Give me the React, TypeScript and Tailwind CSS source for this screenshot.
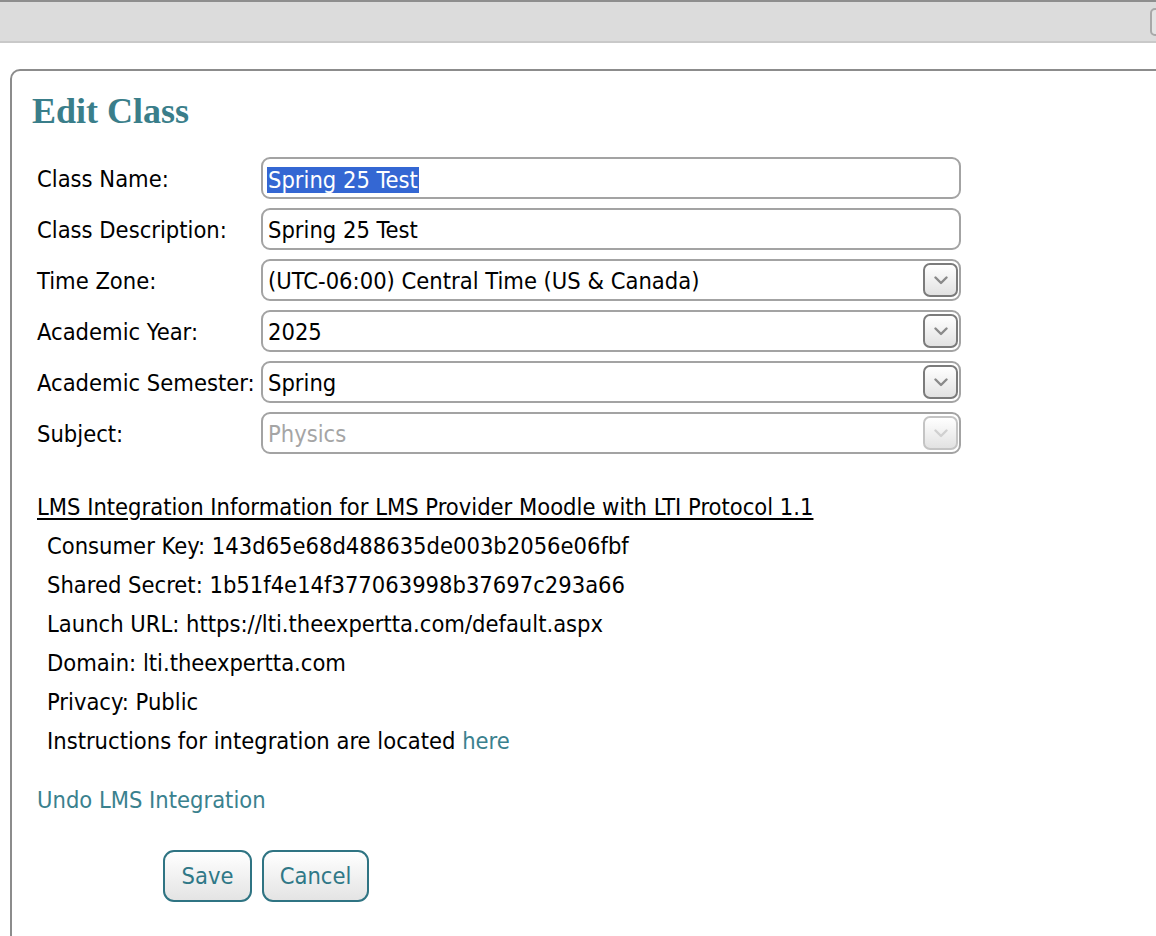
import React from "react";

const font = { fontFamily: '"DejaVu Sans", Verdana, sans-serif' };

const Chevron = ({ disabled }: { disabled?: boolean }) => (
  <div
    className={
      "absolute right-[1px] top-[2px] flex h-[34px] w-[35px] items-center justify-center rounded-[7px] border-2 bg-gradient-to-b from-white to-[#e2e2e2] " +
      (disabled ? "border-[#c4c4c4]" : "border-[#7b7b7b]")
    }
  >
    <svg width="14" height="9" viewBox="0 0 14 9" fill="none">
      <path
        d="M1.5 1.5 L7 7 L12.5 1.5"
        stroke={disabled ? "#d0d0d0" : "#8a8a8a"}
        strokeWidth="2.4"
        strokeLinecap="round"
        strokeLinejoin="round"
      />
    </svg>
  </div>
);

interface RowProps {
  label: string;
  value: string;
  select?: boolean;
  disabled?: boolean;
  highlight?: boolean;
}

const Row: React.FC<RowProps> = ({ label, value, select, disabled, highlight }) => (
  <div className="flex items-center">
    <div className="w-[224px] shrink-0 pt-[4px] text-black">{label}</div>
    <div className="relative flex h-[42px] w-[700px] items-center rounded-[9px] border-2 border-[#a3a3a3] bg-white pl-[4px] pt-[3px]">
      {highlight ? (
        <span className="bg-[#3467d3] px-[1px] leading-[26px] text-white">{value}</span>
      ) : (
        <span className={"pl-[1px] " + (disabled ? "text-[#a5a5a5]" : "text-black")}>{value}</span>
      )}
      {select && <Chevron disabled={disabled} />}
    </div>
  </div>
);

const details = [
  "Consumer Key: 143d65e68d488635de003b2056e06fbf",
  "Shared Secret: 1b51f4e14f377063998b37697c293a66",
  "Launch URL: https://lti.theexpertta.com/default.aspx",
  "Domain: lti.theexpertta.com",
  "Privacy: Public",
];

export default function App() {
  return (
    <div className="h-[936px] w-[1156px] overflow-hidden bg-white text-[23.5px] font-stretch-condensed" style={font}>
      <div className="relative h-[43px] border-t-2 border-b-2 border-t-[#8e8e8e] border-b-[#c9c9c9] bg-[#dcdcdc]">
        <div className="absolute right-[-8px] top-[6px] h-[28px] w-[14px] rounded-[5px] border-2 border-[#a8a8a8] bg-[#e4e4e4]" />
      </div>
      <div className="ml-[10px] mt-[26px] h-[900px] w-[1200px] rounded-tl-[10px] border-2 border-[#8c8c8c] pl-[25px] pt-[18px]">
        <h1
          className="-ml-[5px] text-[36px] font-bold leading-[44px] text-[#3a7e8a]"
          style={{ fontFamily: '"Liberation Serif", "Times New Roman", serif', fontStretch: "normal" }}
        >
          Edit Class
        </h1>
        <div className="mt-[24px] flex flex-col gap-[9px]">
          <Row label="Class Name:" value="Spring 25 Test" highlight />
          <Row label="Class Description:" value="Spring 25 Test" />
          <Row label="Time Zone:" value="(UTC-06:00) Central Time (US & Canada)" select />
          <Row label="Academic Year:" value="2025" select />
          <Row label="Academic Semester:" value="Spring" select />
          <Row label="Subject:" value="Physics" select disabled />
        </div>
        <div className="mt-[34px] leading-[39px]">
          <div className="text-black underline underline-offset-[3px]">
            LMS Integration Information for LMS Provider Moodle with LTI Protocol 1.1
          </div>
          <div className="pl-[10px] text-black">
            {details.map((d) => (
              <div key={d}>{d}</div>
            ))}
            <div>
              Instructions for integration are located <span className="text-[#3a818e]">here</span>
            </div>
          </div>
          <div className="mt-[20px] text-[#3a818e]">Undo LMS Integration</div>
        </div>
        <div className="ml-[126px] mt-[30px] flex gap-[10px]">
          <button className="h-[52px] w-[89px] rounded-[11px] border-2 border-[#2f7483] bg-gradient-to-b from-white to-[#e4e4e4] pt-[2px] text-[#2f7887]">
            Save
          </button>
          <button className="h-[52px] w-[107px] rounded-[11px] border-2 border-[#2f7483] bg-gradient-to-b from-white to-[#e4e4e4] pt-[2px] text-[#2f7887]">
            Cancel
          </button>
        </div>
      </div>
    </div>
  );
}
